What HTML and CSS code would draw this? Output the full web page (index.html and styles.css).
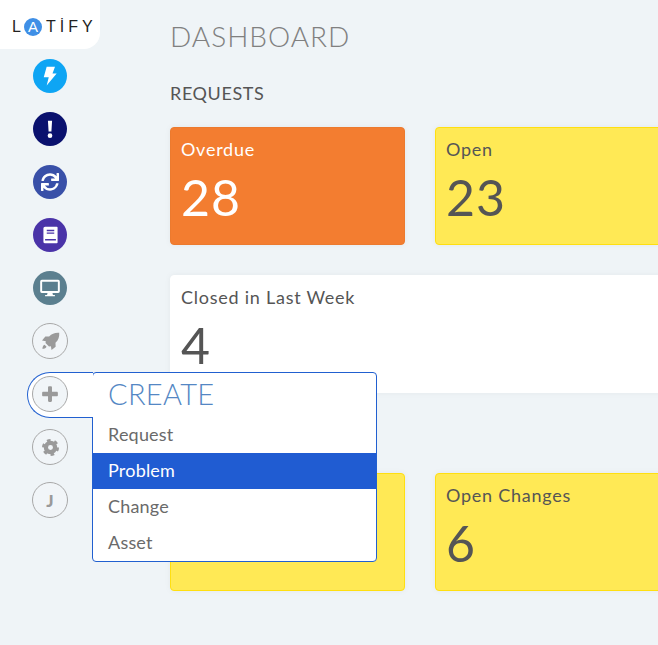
FILE: index.html
```html
<!DOCTYPE html>
<html lang="en">
<head>
<meta charset="utf-8">
<title>Latify Dashboard</title>
<link rel="stylesheet" href="styles.css">
</head>
<body>
<div class="app">
  <aside class="sidebar">
    <div class="logo"><span>L</span><span class="logo-a">A</span><span>T</span><span>İ</span><span>F</span><span>Y</span></div>
    <nav class="nav">
      <a class="nav-item c-bolt"><svg viewBox="0 0 24 24" class="i-bolt"><path d="M8 1h10l-3 8h5L8 23.500 10.500 13.500H4.500z"/></svg></a>
      <a class="nav-item c-alert"><svg viewBox="0 0 24 24" class="i-alert"><path d="M9.500 2h5L13.700 15h-3.400z"/><circle cx="12" cy="20" r="2.800"/></svg></a>
      <a class="nav-item c-sync"><svg viewBox="0 0 512 512" class="i-sync"><path d="M440.650 12.570l4 82.770A247.160 247.160 0 0 0 255.830 8C134.730 8 33.910 94.920 12.290 209.820A12 12 0 0 0 24.090 224h49.050a12 12 0 0 0 11.670-9.260 175.910 175.910 0 0 1 317-56.940l-101.460-4.860a12 12 0 0 0-12.570 12v47.410a12 12 0 0 0 12 12H500a12 12 0 0 0 12-12V12a12 12 0 0 0-12-12h-47.370a12 12 0 0 0-11.980 12.570zM255.830 432a175.610 175.610 0 0 1-146-77.800l101.800 4.870a12 12 0 0 0 12.570-12v-47.400a12 12 0 0 0-12-12H12a12 12 0 0 0-12 12V500a12 12 0 0 0 12 12h47.350a12 12 0 0 0 12-12.600l-4.150-82.570A247.170 247.170 0 0 0 255.830 504c121.110 0 221.930-86.920 243.550-201.820a12 12 0 0 0-11.800-14.180h-49.050a12 12 0 0 0-11.670 9.260A175.860 175.860 0 0 1 255.830 432z"/></svg></a>
      <a class="nav-item c-book"><svg viewBox="0 0 18 20" class="i-book"><path fill-rule="evenodd" d="M2.500 0H16.500a1 1 0 0 1 1 1v18a1 1 0 0 1-1 1H2.500A2 2 0 0 1 .5 18V2a2 2 0 0 1 2-2zM4.500 3.800v1.600h9V3.800zM4.500 7v1.600h9V7zM2.500 14.800v1.800h13v-1.800z"/></svg></a>
      <a class="nav-item c-desk"><svg viewBox="0 0 24 22" class="i-desk"><path fill-rule="evenodd" d="M2 1h20a2 2 0 0 1 2 2v12a2 2 0 0 1-2 2h-7l.6 2.500H18V21H6v-1.500h2.400L9 17H2a2 2 0 0 1-2-2V3a2 2 0 0 1 2-2zm.4 2.300v11.400h19.200V3.300z"/></svg></a>
      <a class="nav-item ghost"><svg viewBox="0 0 24 24" class="i-rocket"><path d="M23 1c.4 5.200-1 9.300-4.700 12.700l.2 4.800-5.200 4.200-.8-4.800-2.400.4L5.700 14l.4-2.400-4.800-.8 4.200-5.200 4.800.2C13.700 2 17.800.6 23 1z"/><path d="M4.500 16c-1.600.6-2.500 2.200-2.800 5.300 3.100-.3 4.700-1.200 5.300-2.800z"/></svg></a>
      <a class="nav-item ghost"><svg viewBox="0 0 448 512" class="i-plus"><path d="M416 190H280V64c0-17.670-14.330-32-32-32h-48c-17.670 0-32 14.330-32 32v126H32c-17.670 0-32 14.330-32 32v68c0 17.670 14.330 32 32 32h136v126c0 17.670 14.330 32 32 32h48c17.670 0 32-14.330 32-32V322h136c17.670 0 32-14.330 32-32v-68c0-17.670-14.330-32-32-32z"/></svg></a>
      <a class="nav-item ghost"><svg viewBox="0 0 24 24" class="i-cog"><circle class="cog-teeth" cx="12" cy="12" r="10"/><circle class="cog-ring" cx="12" cy="12" r="6.500"/></svg></a>
      <a class="nav-item ghost initial">J</a>
    </nav>
  </aside>

  <main class="main">
    <h1 class="title">DASHBOARD</h1>
    <h2 class="section">REQUESTS</h2>
    <div class="grid">
      <section class="card orange"><p class="label">Overdue</p><p class="value">28</p></section>
      <section class="card yellow"><p class="label">Open</p><p class="value">23</p></section>
      <section class="card white wide"><p class="label">Closed in Last Week</p><p class="value">4</p></section>
    </div>
    <h2 class="section section-changes">CHANGES</h2>
    <div class="grid">
      <section class="card yellow"><p class="label">Overdue Changes</p><p class="value"></p></section>
      <section class="card yellow"><p class="label">Open Changes</p><p class="value">6</p></section>
    </div>
  </main>

  <div class="create-tab"></div>
  <div class="create-menu">
    <div class="create-title">CREATE</div>
    <a class="create-item">Request</a>
    <a class="create-item active">Problem</a>
    <a class="create-item">Change</a>
    <a class="create-item">Asset</a>
  </div>
</div>
</body>
</html>
```
FILE: styles.css
```css
* { box-sizing: border-box; }
html, body { margin: 0; height: 100%; overflow: hidden; }
body { background: #eff4f7; color: #555; font-family: "Lato", "Open Sans", sans-serif; }
.app { position: relative; display: flex; width: 658px; height: 645px; overflow: hidden; }

.sidebar { flex: 0 0 100px; width: 100px; }
.logo {
  height: 49px; background: #fff; border-bottom-right-radius: 16px;
  display: flex; align-items: center; justify-content: flex-start; gap: 4px;
  padding: 4px 0 0 12px; font: 400 16px "Liberation Sans", sans-serif; color: #222;
}
.logo-a {
  width: 18px; height: 18px; border-radius: 50%; background: #3f8fe6;
  display: flex; align-items: center; justify-content: center; margin: 0 0 0 -1px;
  color: #fff; font-size: 15px;
}
.nav { display: flex; flex-direction: column; align-items: center; gap: 17px; padding-top: 9px; }
.nav-item {
  position: relative; z-index: 3; width: 36px; height: 36px; border-radius: 50%;
  display: flex; align-items: center; justify-content: center; fill: #fff;
  background-clip: content-box; padding: 1px;
}
.c-bolt { background-color: #0ea5f4; }
.c-alert { background-color: #0a116e; }
.c-sync { background-color: #3950a8; }
.c-book { background-color: #4a33a8; }
.c-desk { background-color: #5b7f8f; }
.ghost { border: 1px solid #a8a8a8; padding: 0; fill: #9a9a9a; background: #f1f5f8; }
.i-bolt { width: 20px; height: 20px; }
.i-alert { width: 20px; height: 20px; }
.i-sync { width: 18px; height: 18px; }
.i-book { width: 15px; height: 18px; }
.i-desk { width: 20px; height: 18px; }
.i-rocket { width: 19px; height: 19px; }
.i-plus { width: 16px; height: 18px; }
.i-cog { width: 17px; height: 17px; }
.cog-teeth { fill: none; stroke: #9a9a9a; stroke-width: 4; stroke-dasharray: 5 5.470; }
.cog-ring { fill: none; stroke: #9a9a9a; stroke-width: 6; }
.initial { color: #9a9a9a; font: 900 17px "Lato", sans-serif; }

.main { flex: 1 1 auto; min-width: 0; padding: 0 0 0 70px; }
.title { margin: 0; padding-top: 19px; font-size: 28px; line-height: 34px; font-weight: 300; color: #808080; letter-spacing: 1px; }
.section { margin: 0; padding-top: 29px; font-size: 18px; line-height: 22px; font-weight: 400; color: #555; letter-spacing: .6px; }
.section-changes { padding-top: 26px; height: 80px; }
.grid { display: grid; grid-template-columns: 235px 235px; gap: 30px; margin-top: 23px; width: 500px; }
.section-changes + .grid { margin-top: 0; }
.card { height: 118px; border-radius: 4px; padding: 10px 10px; border: 1px solid transparent; box-shadow: 0 0 6px rgba(0, 0, 0, .05); }
.card p { margin: 0; }
.wide { grid-column: 1 / span 2; width: 600px; }
.orange { background: #f37d30; border-color: #ec7a2e; color: #fff; }
.yellow { background: #ffe955; border-color: #ffdf10; }
.white { background: #fff; border-color: #fff; }
.label { font-size: 18px; line-height: 22px; letter-spacing: .75px; }
.value { font-size: 50px; line-height: 60px; margin-top: 7px !important; font-weight: 400; letter-spacing: 1px; }

.create-tab {
  position: absolute; z-index: 2; left: 27px; top: 372px; width: 66px; height: 46px;
  background: #fff; border: 1px solid #2160d0; border-right: 0; border-radius: 23px 0 0 23px;
}
.create-menu {
  position: absolute; z-index: 1; left: 92px; top: 372px; width: 285px; height: 190px;
  background: #fff; border: 1px solid #2160d0; border-radius: 4px; display: flex; flex-direction: column;
}
.create-title { height: 44px; padding-left: 15px; font-size: 29px; line-height: 42px; font-weight: 300; color: #5487c4; letter-spacing: .3px; }
.create-item { height: 36px; padding-left: 15px; font-size: 18px; line-height: 34px; color: #6a6a6a; letter-spacing: .2px; }
.create-item.active { background: #205cd2; color: #fff; }
```
